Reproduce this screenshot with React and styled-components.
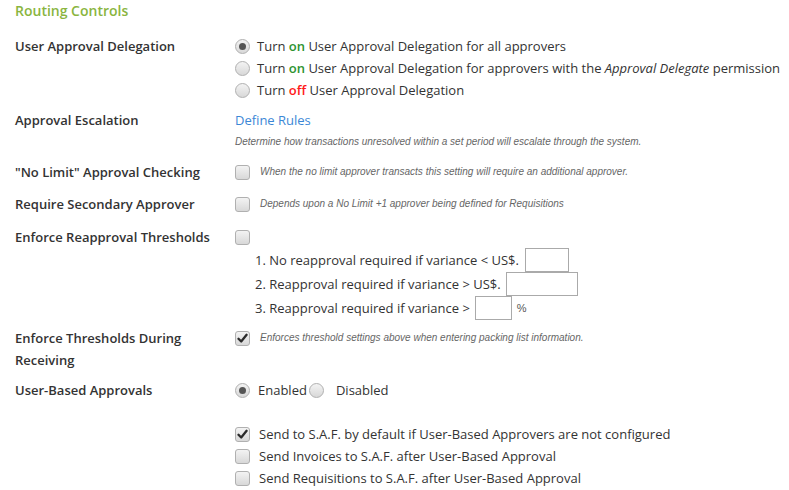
import React from "react";
import styled, { createGlobalStyle, css } from "styled-components";

const Global = createGlobalStyle`
  html, body { margin: 0; padding: 0; background: #fff; }
  body { font-family: "Open Sans", "Liberation Sans", sans-serif; color: #333; font-size: 13px; }
`;

const Page = styled.div`
  padding: 0 0 0 15px;
  width: 789px;
  height: 490px;
  box-sizing: border-box;
  overflow: hidden;
`;

const Title = styled.h2`
  margin: 0;
  font-size: 14px;
  font-weight: 600;
  color: #8ab53f;
  line-height: 22px;
`;

const Row = styled.div`
  display: grid;
  grid-template-columns: 205px 1fr;
  column-gap: 15px;
  margin-top: ${(p) => p.$mt}px;
  align-items: start;
`;

const Label = styled.div`
  font-weight: 600;
  line-height: 22px;
  color: #333;
`;

const Field = styled.div`
  display: flex;
  flex-direction: column;
`;

const Option = styled.label`
  display: flex;
  align-items: center;
  height: ${(p) => p.$h || 22}px;
  gap: ${(p) => p.$gap || 7}px;
  white-space: nowrap;
`;

const OptText = styled.span`
  line-height: 22px;
  color: #333;
`;

const On = styled.b`
  font-weight: 600;
  color: ${(p) => (p.$off ? "#ff1a1a" : "#2d9330")};
`;

const Em = styled.i`
  font-style: italic;
`;

const controlBase = css`
  flex: none;
  box-sizing: border-box;
  width: 15px;
  height: 15px;
  border: 1px solid #b0b0b0;
  background: linear-gradient(#f3f3f3, #d8d8d8);
  display: inline-flex;
  align-items: center;
  justify-content: center;
`;

const RadioBox = styled.span`
  ${controlBase}
  border-radius: 50%;
`;

const Dot = styled.span`
  width: 7px;
  height: 7px;
  border-radius: 50%;
  background: #555;
`;

const CheckBox = styled.span`
  ${controlBase}
  border-radius: 3px;
`;

const Radio = ({ checked }) => <RadioBox>{checked && <Dot />}</RadioBox>;

const Check = ({ checked }) => (
  <CheckBox>
    {checked && (
      <svg width="11" height="11" viewBox="0 0 11 11">
        <path d="M1.5 5.8 L4.2 8.5 L9.6 1.8" fill="none" stroke="#2b2b2b" strokeWidth="2.3" strokeLinejoin="round" strokeLinecap="round" />
      </svg>
    )}
  </CheckBox>
);

const Link = styled.a`
  color: #3b87d6;
  text-decoration: none;
  line-height: 22px;
`;

const Hint = styled.div`
  font-family: "Liberation Sans", Arial, sans-serif;
  font-style: italic;
  font-size: 10px;
  color: #666;
  line-height: 14px;
  margin-top: ${(p) => p.$mt || 0}px;
`;

const SubList = styled.div`
  display: flex;
  flex-direction: column;
  padding-left: 20px;
`;

const SubItem = styled.div`
  display: flex;
  align-items: center;
  height: ${(p) => p.$h}px;
  gap: 5px;
  white-space: nowrap;
`;

const Input = styled.input`
  box-sizing: border-box;
  width: ${(p) => p.$w}px;
  height: 24px;
  border: 1px solid #aaa;
  border-radius: 0;
  padding: 0 4px;
  margin: 0 0 0 ${(p) => p.$ml || 0}px;
  background: #fff;
  outline: none;
`;

const Percent = styled.span`
  font-family: "Liberation Sans", Arial, sans-serif;
  font-size: 11px;
  color: #555;
`;

const Inline = styled.div`
  display: flex;
  align-items: center;
  height: 22px;
  white-space: nowrap;
`;

const InlineText = styled.span`
  margin: 0 ${(p) => p.$mr || 0}px 0 ${(p) => p.$ml || 0}px;
`;

export default function App() {
  return (
    <>
      <Global />
      <Page>
        <Title>Routing Controls</Title>

        <Row $mt={13}>
          <Label>User Approval Delegation</Label>
          <Field>
            <Option>
              <Radio checked />
              <OptText>
                Turn <On>on</On> User Approval Delegation for all approvers
              </OptText>
            </Option>
            <Option>
              <Radio />
              <OptText>
                Turn <On>on</On> User Approval Delegation for approvers with the <Em>Approval Delegate</Em> permission
              </OptText>
            </Option>
            <Option>
              <Radio />
              <OptText>
                Turn <On $off>off</On> User Approval Delegation
              </OptText>
            </Option>
          </Field>
        </Row>

        <Row $mt={8}>
          <Label>Approval Escalation</Label>
          <Field>
            <Link href="#">Define Rules</Link>
            <Hint $mt={4}>Determine how transactions unresolved within a set period will escalate through the system.</Hint>
          </Field>
        </Row>

        <Row $mt={12}>
          <Label>"No Limit" Approval Checking</Label>
          <Field>
            <Option $gap={10}>
              <Check />
              <Hint>When the no limit approver transacts this setting will require an additional approver.</Hint>
            </Option>
          </Field>
        </Row>

        <Row $mt={10}>
          <Label>Require Secondary Approver</Label>
          <Field>
            <Option $gap={10}>
              <Check />
              <Hint>Depends upon a No Limit +1 approver being defined for Requisitions</Hint>
            </Option>
          </Field>
        </Row>

        <Row $mt={11}>
          <Label>Enforce Reapproval Thresholds</Label>
          <Field>
            <Option $gap={10}>
              <Check />
            </Option>
            <SubList>
              <SubItem $h={24}>
                <span>1. No reapproval required if variance &lt; US$.</span>
                <Input $w={44} $ml={1} />
              </SubItem>
              <SubItem $h={24}>
                <span>2. Reapproval required if variance &gt; US$.</span>
                <Input $w={72} />
              </SubItem>
              <SubItem $h={23}>
                <span>3. Reapproval required if variance &gt;</span>
                <Input $w={37} />
                <Percent>%</Percent>
              </SubItem>
            </SubList>
          </Field>
        </Row>

        <Row $mt={8}>
          <Label>Enforce Thresholds During Receiving</Label>
          <Field>
            <Option $gap={10}>
              <Check checked />
              <Hint>Enforces threshold settings above when entering packing list information.</Hint>
            </Option>
          </Field>
        </Row>

        <Row $mt={8}>
          <Label>User-Based Approvals</Label>
          <Field>
            <Inline>
              <Radio checked />
              <InlineText $ml={8} $mr={2}>Enabled</InlineText>
              <Radio />
              <InlineText $ml={12}>Disabled</InlineText>
            </Inline>
          </Field>
        </Row>

        <Row $mt={22}>
          <Label />
          <Field>
            <Option $gap={9}>
              <Check checked />
              <OptText>Send to S.A.F. by default if User-Based Approvers are not configured</OptText>
            </Option>
            <Option $gap={9}>
              <Check />
              <OptText>Send Invoices to S.A.F. after User-Based Approval</OptText>
            </Option>
            <Option $gap={9}>
              <Check />
              <OptText>Send Requisitions to S.A.F. after User-Based Approval</OptText>
            </Option>
          </Field>
        </Row>
      </Page>
    </>
  );
}
